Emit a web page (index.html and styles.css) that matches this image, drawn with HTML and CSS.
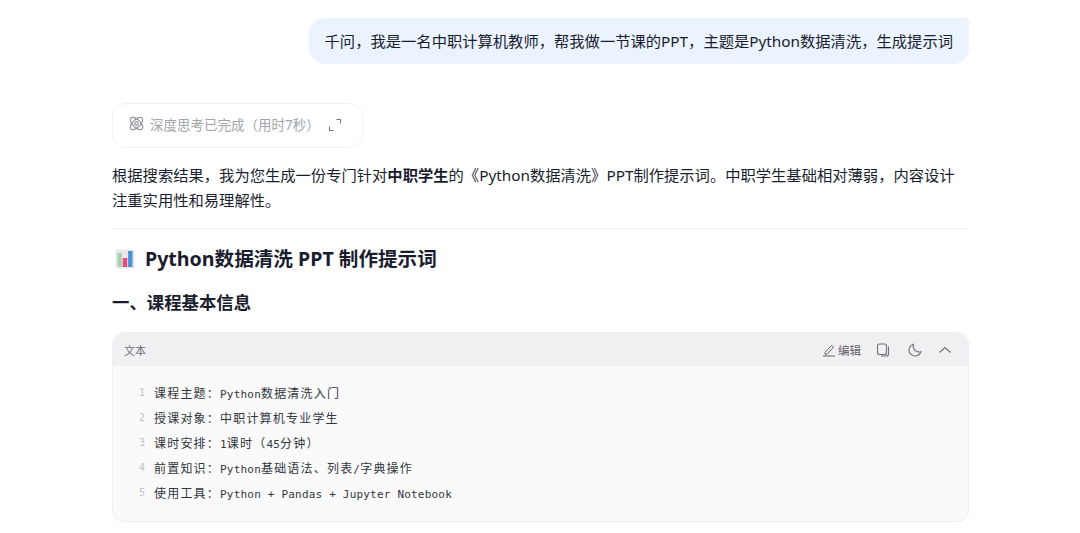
FILE: index.html
```html
<!DOCTYPE html>
<html lang="zh-CN">
<head>
<meta charset="utf-8">
<title>Python数据清洗</title>
<link rel="stylesheet" href="styles.css">
</head>
<body>
<main class="chat">
  <div class="user-row"><div class="bubble">千问，我是一名中职计算机教师，帮我做一节课的PPT，主题是Python数据清洗，生成提示词</div></div>
  <div class="think">
    <svg class="atom" viewBox="0 0 16 16" width="17" height="17" fill="none" stroke="#8f9298" stroke-width="1.1"><ellipse cx="8" cy="8" rx="3.6" ry="7.4" transform="rotate(45 8 8)"/><ellipse cx="8" cy="8" rx="3.6" ry="7.4" transform="rotate(-45 8 8)"/><circle cx="8" cy="8" r="1.6"/></svg>
    <span class="think-text">深度思考已完成（用时7秒）</span>
    <svg class="expand" viewBox="0 0 14 14" width="14" height="14" fill="none" stroke="#75787e" stroke-width="1.1"><path d="M8.5 1.5h4v4M1.5 8.5v4h4"/></svg>
  </div>
  <p class="para">根据搜索结果，我为您生成一份专门针对<strong>中职学生</strong>的《Python数据清洗》PPT制作提示词。中职学生基础相对薄弱，内容设计注重实用性和易理解性。</p>
  <hr class="rule">
  <h2 class="h2"><svg class="chart" viewBox="0 0 20 20" width="20" height="20"><rect x="0.5" y="0.5" width="19" height="19" rx="1.5" fill="#ebe6ea"/><rect x="2.5" y="4" width="4.4" height="14" fill="#a6d3ae"/><rect x="7.8" y="9" width="4.4" height="9" fill="#e8487f"/><rect x="13.1" y="2" width="4.4" height="16" fill="#4a93d6"/></svg><span>Python数据清洗 PPT 制作提示词</span></h2>
  <h3 class="h3">一、课程基本信息</h3>
  <section class="code">
    <header class="code-head">
      <span class="lang">文本</span>
      <div class="tools">
        <span class="edit"><svg viewBox="0 0 14 14" width="14" height="14" fill="none" stroke="#5f6269" stroke-width="1"><path d="M3 9.5 9.5 2.5l2 1.8L5 11.2H3zM1 13h12"/></svg>编辑</span>
        <svg class="copy" viewBox="0 0 14 14" width="14" height="14" fill="none" stroke="#6e7178" stroke-width="1.1"><rect x="1.5" y="1" width="9" height="10.5" rx="2"/><path d="M12.5 3.5v7.5a2 2 0 0 1-2 2H5"/></svg>
        <svg viewBox="0 0 14 14" width="14" height="14" fill="none" stroke="#6e7178" stroke-width="1.1"><path d="M5.5 1.2a6 6 0 1 0 7.3 7.6A6 6 0 0 1 5.5 1.2z"/></svg>
        <svg viewBox="0 0 14 14" width="14" height="14" fill="none" stroke="#6e7178" stroke-width="1.1"><path d="M1.5 9.5 7 4.5l5.5 5"/></svg>
      </div>
    </header>
    <ol class="lines">
      <li><i>1</i><span>课程主题：<b>Python</b>数据清洗入门</span></li>
      <li><i>2</i><span>授课对象：中职计算机专业学生</span></li>
      <li><i>3</i><span>课时安排：<b>1</b>课时（<b>45</b>分钟）</span></li>
      <li><i>4</i><span>前置知识：<b>Python</b>基础语法、列表<b>/</b>字典操作</span></li>
      <li><i>5</i><span>使用工具：<b>Python + Pandas + Jupyter Notebook</b></span></li>
    </ol>
  </section>
</main>
</body>
</html>
```
FILE: styles.css
```css
* { box-sizing: border-box; }
html, body { margin: 0; padding: 0; background: #fff; }
body { font-family: "Noto Sans", "Noto Sans CJK SC", sans-serif; color: #1a1d2e; overflow: hidden; height: 533px; }
.chat { width: 857px; margin-left: 112px; padding-top: 18px; }
.user-row { display: flex; justify-content: flex-end; }
.bubble { height: 46px; display: flex; align-items: center; padding: 0 16px 3px; background: #eaf3fe; border-radius: 16px 4px 16px 16px; font-size: 15.3px; white-space: nowrap; }
.think { margin-top: 39px; width: 251px; height: 45px; border: 1px solid #f2f2f4; border-radius: 14px; display: flex; align-items: center; padding: 0 0 4px 15px; }
.atom { flex: none; }
.think-text { margin-left: 5px; font-size: 13.5px; color: #a2a4a9; white-space: nowrap; }
.expand { margin: 3px 0 0 8px; flex: none; }
.para { margin: 15px 0 0; font-size: 15.3px; line-height: 25px; }
.para strong { font-weight: 700; }
.rule { margin: 15px 0 0; border: 0; border-top: 1px solid #f2f2f4; }
.h2 { margin: 16px 0 0; font-size: 19.6px; line-height: 28px; font-weight: 700; display: flex; align-items: center; }
.chart { margin-left: 3px; margin-right: 10px; }
.h3 { margin: 17px 0 0; font-size: 17.4px; line-height: 24px; font-weight: 700; }
.code { margin-top: 18px; height: 190px; border: 1px solid #eeeef0; border-radius: 12px; background: #fafafa; overflow: hidden; }
.code-head { height: 33px; background: #f0f0f2; display: flex; align-items: center; justify-content: space-between; padding: 0 16px 0 11px; }
.lang { font-size: 11px; color: #6e7178; }
.tools { display: flex; align-items: center; gap: 16px; }
.copy { margin-right: 2px; }
.edit { display: flex; align-items: center; gap: 2px; font-size: 11.5px; color: #5f6269; margin-right: -1px; }
.lines { list-style: none; margin: 0; padding: 14px 0 0 26px; }
.lines li { display: flex; height: 25px; line-height: 25px; font-family: "Noto Sans CJK SC", sans-serif; font-size: 12px; letter-spacing: 1.2px; color: #33363d; white-space: nowrap; }
.lines i { width: 15px; font-style: normal; font-family: "DejaVu Sans Mono", monospace; font-size: 10px; letter-spacing: 0; color: #c0c2c6; }
.lines b { font-weight: 400; font-family: "DejaVu Sans Mono", monospace; font-size: 11px; letter-spacing: .2px; }
```
